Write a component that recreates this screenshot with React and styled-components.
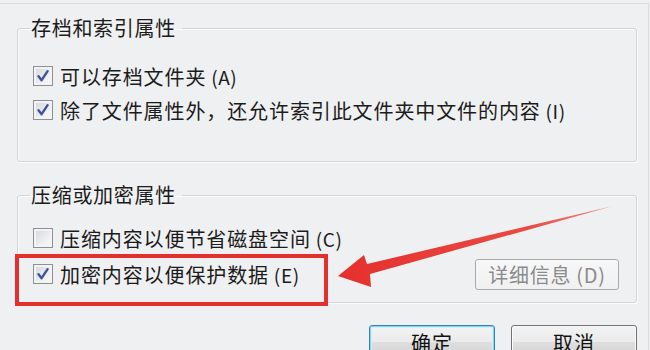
import React from "react";
import styled, { createGlobalStyle } from "styled-components";

const Global = createGlobalStyle`
  html, body { margin: 0; padding: 0; background: #eff0f1; }
  body { font-family: "Noto Sans CJK SC", "Noto Sans", sans-serif; color: #1b1b1b; }
`;

const Page = styled.div`
  position: relative;
  width: 650px;
  height: 350px;
  overflow: hidden;
  background: #eff0f1;
`;

const Panel = styled.div`
  box-sizing: border-box;
  width: 649px;
  height: 347px;
  margin-top: 3px;
  border-top: 1px solid #d9dbdd;
  border-right: 1px solid #d9dbdd;
  padding: 12px 0 0 17px;
  display: flex;
  flex-direction: column;
`;

const Group = styled.fieldset`
  box-sizing: border-box;
  width: 620px;
  margin: ${(p) => p.$mt}px 0 0 0;
  padding: ${(p) => p.$pt}px 17px ${(p) => p.$pb}px 12px;
  border: 1px solid #d3d6d9;
  border-radius: 3px;
  box-shadow: inset 1px 1px 0 #fbfbfc, 1px 1px 0 #fbfbfc;
  display: flex;
  flex-direction: column;
  gap: ${(p) => p.$gap || 0}px;
`;

const Legend = styled.legend`
  padding: 0 6px 0 1px;
  font-size: 20px;
  line-height: 24px;
  letter-spacing: 0.7px;
  color: #1b1b1b;
`;

const Row = styled.div`
  height: 34px;
  padding-left: 3px;
  display: flex;
  align-items: center;
  justify-content: space-between;
`;

const Label = styled.label`
  display: flex;
  align-items: center;
  gap: 7px;
  font-size: 20px;
  letter-spacing: 0.9px;
  white-space: nowrap;
`;

const Key = styled.span`
  font-size: 19px;
  letter-spacing: 0.6px;
`;

const Box = styled.span`
  box-sizing: border-box;
  width: 20px;
  height: 20px;
  border: 1px solid #8e8f90;
  background: linear-gradient(135deg, #d3d6da 0%, #eceef1 60%, #fafafa 100%);
  box-shadow: inset 0 0 0 2px #f3f3f3;
  display: flex;
  align-items: center;
  justify-content: center;
  flex: none;
`;

const Check = ({ checked }) => (
  <Box>
    {checked && (
      <svg width="14" height="14" viewBox="0 0 14 14">
        <path
          d="M2.5 7.2 L5.6 11.2 L11.6 2.2"
          fill="none"
          stroke="#3f5497"
          strokeWidth="2.4"
          strokeLinecap="round"
          strokeLinejoin="round"
        />
      </svg>
    )}
  </Box>
);

const Item = ({ checked, text, k }) => (
  <Label>
    <Check checked={checked} />
    <span>
      {text}
      <Key> ({k})</Key>
    </span>
  </Label>
);

const SmallButton = styled.button`
  box-sizing: border-box;
  width: 144px;
  height: 31px;
  border: 1px solid #a9abad;
  border-radius: 3px;
  background: linear-gradient(#f7f7f7, #f1f1f2);
  color: #8a8b8d;
  font-family: inherit;
  font-size: 20px;
  letter-spacing: 0.7px;
  padding: 0;
  display: flex;
  align-items: center;
  justify-content: center;
`;

const Footer = styled.div`
  width: 620px;
  margin-top: 22px;
  display: flex;
  justify-content: flex-end;
  gap: 16px;
`;

const Button = styled.button`
  box-sizing: border-box;
  width: 126px;
  height: 34px;
  border-radius: 3px;
  border: 1px solid ${(p) => (p.$primary ? "#3b7fb2" : "#707172")};
  box-shadow: ${(p) =>
    p.$primary ? "inset 0 0 0 1px #7fdaf6, inset 0 0 0 2px #cdf1fb" : "inset 0 0 0 1px #fbfbfb"};
  background: linear-gradient(#f3f3f3 0%, #ebebeb 50%, #dedede 50%, #d3d3d3 100%);
  color: #111;
  font-family: inherit;
  font-size: 20px;
  letter-spacing: 1px;
  padding: 0;
`;

const Highlight = styled.div`
  position: absolute;
  left: 15px;
  top: 254px;
  width: 313px;
  height: 52px;
  box-sizing: border-box;
  border: 4px solid #e3302d;
  pointer-events: none;
`;

const ArrowLayer = styled.svg`
  position: absolute;
  left: 0;
  top: 0;
  pointer-events: none;
`;

export default function App() {
  return (
    <Page>
      <Global />
      <Panel>
        <Group $mt={0} $pt={19} $pb={34}>
          <Legend>存档和索引属性</Legend>
          <Row>
            <Item checked text="可以存档文件夹" k="A" />
          </Row>
          <Row>
            <Item checked text="除了文件属性外，还允许索引此文件夹中文件的内容" k="I" />
          </Row>
        </Group>
        <Group $mt={21} $pt={14} $pb={11} $gap={2}>
          <Legend>压缩或加密属性</Legend>
          <Row>
            <Item text="压缩内容以便节省磁盘空间" k="C" />
          </Row>
          <Row>
            <Item checked text="加密内容以便保护数据" k="E" />
            <SmallButton>详细信息 (D)</SmallButton>
          </Row>
        </Group>
        <Footer>
          <Button $primary>确定</Button>
          <Button>取消</Button>
        </Footer>
      </Panel>
      <Highlight />
      <ArrowLayer width="650" height="350" viewBox="0 0 650 350">
        <defs>
          <linearGradient id="ag" x1="338" y1="276" x2="613" y2="206" gradientUnits="userSpaceOnUse">
            <stop offset="0" stopColor="#e5302c" />
            <stop offset="0.7" stopColor="#ea4a45" />
            <stop offset="1" stopColor="#f08f8c" />
          </linearGradient>
        </defs>
        <polygon
          points="338,276 364,255 367,264 613,206 370,274 371,287"
          fill="url(#ag)"
        />
      </ArrowLayer>
    </Page>
  );
}
